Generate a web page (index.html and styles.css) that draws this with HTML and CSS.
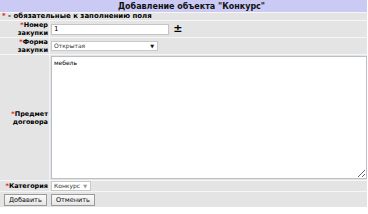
FILE: index.html
```html
<!DOCTYPE html>
<html lang="ru">
<head>
    <meta charset="UTF-8">
    <title>Добавление объекта "Конкурс"</title>
    <link rel="stylesheet" href="styles.css">
</head>
<body>
    <form class="edit-form">
        <table class="form-table">
            <tr>
                <th colspan="2" class="title">Добавление объекта "Конкурс"</th>
            </tr>
            <tr>
                <td colspan="2" class="note"><span class="req">*</span> - обязательные к заполнению поля</td>
            </tr>
            <tr class="row-num">
                <td class="label"><span class="req">*</span>Номер<br>закупки</td>
                <td class="field">
                    <input type="text" class="inp-num" value="1">
                    <span class="plusminus">±</span>
                </td>
            </tr>
            <tr class="row-form">
                <td class="label"><span class="req">*</span>Форма<br>закупки</td>
                <td class="field">
                    <div class="select sel-form">Открытая <span class="arrow">&#9660;</span></div>
                </td>
            </tr>
            <tr class="row-subject">
                <td class="label"><span class="req">*</span>Предмет<br>договора</td>
                <td class="field">
                    <textarea class="subject">мебель</textarea>
                </td>
            </tr>
            <tr class="row-cat">
                <td class="label"><span class="req">*</span>Категория</td>
                <td class="field">
                    <div class="select sel-cat">Конкурс <span class="arrow small">&#9660;</span></div>
                </td>
            </tr>
            <tr class="row-buttons">
                <td colspan="2">
                    <button type="button" class="btn">Добавить</button>
                    <button type="button" class="btn">Отменить</button>
                </td>
            </tr>
        </table>
    </form>
</body>
</html>
```
FILE: styles.css
```css
body {
    margin: 0;
    background-color: #fff;
    font-family: "DejaVu Sans", Verdana, sans-serif;
    font-size: 7px;
}
.form-table {
    width: 367px;
    border-collapse: collapse;
    background-color: #e4e4e4;
}
.form-table td, .form-table th {
    padding: 0;
    border-bottom: 1px solid #f6f6f6;
}
.title {
    height: 12px;
    background-color: #cacaf4;
    font-size: 8px;
    font-weight: bold;
    text-align: center;
    color: #111;
    padding-left: 16px !important;
}
.note {
    height: 7px;
    font-weight: bold;
    padding-left: 2px !important;
    line-height: 7px;
}
.req {
    color: #e02020;
}
.label {
    width: 48px;
    text-align: right;
    font-weight: bold;
    font-size: 6.5px;
    line-height: 8px;
    padding-right: 1px !important;
    vertical-align: middle;
    border-right: 1px solid #f2f2f2;
}
.field {
    padding-left: 1px !important;
}
.row-num td {
    height: 16px;
}
.row-form td {
    height: 14px;
}
.inp-num {
    width: 118px;
    height: 11px;
    box-sizing: border-box;
    border: 1px solid #c4c4c4;
    background: #fff;
    font-family: "DejaVu Sans", Verdana, sans-serif;
    font-size: 7px;
    padding: 0 2px;
    margin: 0;
    vertical-align: middle;
}
.plusminus {
    display: inline-block;
    font-size: 11px;
    font-weight: bold;
    margin-left: 2px;
    vertical-align: middle;
    line-height: 10px;
}
.select {
    display: inline-block;
    box-sizing: border-box;
    height: 10px;
    line-height: 8px;
    border: 1px solid #c8c8c8;
    background: #fff;
    font-size: 6px;
    color: #333;
    padding-left: 2px;
    position: relative;
    vertical-align: middle;
}
.sel-form {
    width: 107px;
}
.sel-cat {
    width: 40px;
}
.arrow {
    position: absolute;
    right: 3px;
    top: 0;
    font-size: 5px;
    color: #111;
}
.arrow.small {
    color: #999;
}
.row-subject td {
    height: 125px;
}
.subject {
    display: block;
    width: 316px;
    height: 123px;
    box-sizing: border-box;
    border: 1px solid #b8c0c8;
    background: #fff;
    font-family: "DejaVu Sans", Verdana, sans-serif;
    font-size: 6px;
    padding: 2px 2px;
    margin: 0;
    resize: both;
}
.row-cat td {
    height: 10px;
}
.row-buttons td {
    height: 15px;
    padding-left: 4px !important;
    border-bottom: none;
}
.btn {
    height: 12px;
    box-sizing: border-box;
    border: 1px solid #9a9a9a;
    background: linear-gradient(#fafafa, #e6e6e6);
    font-family: "DejaVu Sans", Verdana, sans-serif;
    font-size: 6.5px;
    padding: 0 4px;
    margin-right: 2px;
    vertical-align: middle;
}
```
